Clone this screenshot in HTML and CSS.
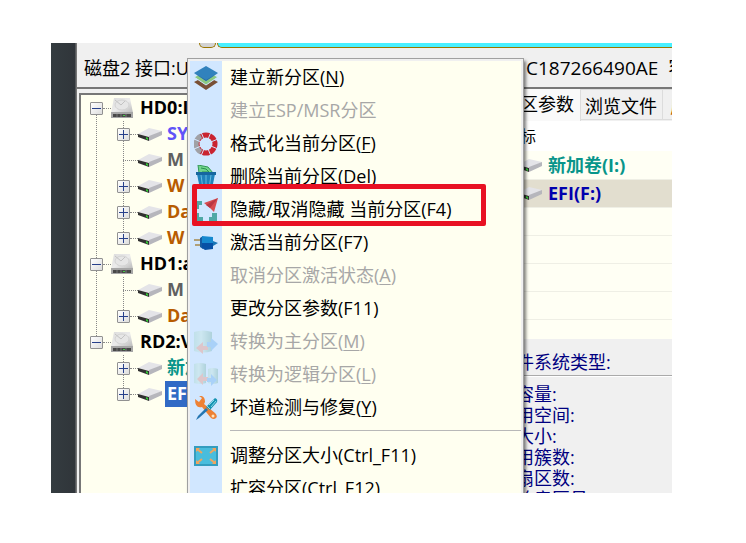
FILE: index.html
```html
<!DOCTYPE html>
<html lang="zh-CN">
<head>
    <meta charset="UTF-8">
    <meta name="viewport" content="width=device-width, initial-scale=1.0">
    <title>磁盘2</title>
    <link rel="stylesheet" href="styles.css">
</head>
<body>
    <!-- Shared icons -->
    <svg class="defs" width="0" height="0" aria-hidden="true">
        <defs>
            <linearGradient id="metal" x1="0" y1="0" x2="1" y2="1">
                <stop offset="0" stop-color="#dcdcdc"/>
                <stop offset="0.5" stop-color="#ececec"/>
                <stop offset="1" stop-color="#b8b8b8"/>
            </linearGradient>
            <linearGradient id="drum" x1="0" x2="1">
                <stop offset="0" stop-color="#a9d8cb"/>
                <stop offset="0.4" stop-color="#c8e8dd"/>
                <stop offset="1" stop-color="#7db5a8"/>
            </linearGradient>
        </defs>
        <symbol id="disk" viewBox="0 0 22 22">
            <path d="M3 1h16l3 15H0z" fill="url(#metal)"/>
            <ellipse cx="11" cy="8" rx="7" ry="5" fill="#e6e6e6" stroke="#d2d2d2"/>
            <path d="M4 3l6 5 4-4" fill="none" stroke="#c2c2c2"/>
            <path d="M0 15h22v6H0z" fill="#a6a6a6"/>
            <path d="M2 17h18v3H2z" fill="#484848"/>
            <path d="M6 17v3M10 17v3M15 17v3" stroke="#777"/>
            <path d="M12 18h2v1h-2z" fill="#4c4"/>
        </symbol>
        <symbol id="volume" viewBox="0 0 24 13">
            <path d="M0 6L11 0l13 3-12 6z" fill="#e4e4e8"/>
            <path d="M11 8l13-5v4l-13 6z" fill="#b6b6bc"/>
            <path d="M0 6l11 3v4L0 9z" fill="#303030"/>
            <path d="M8 9l2 1v2l-2-1z" fill="#3c3"/>
        </symbol>
        <symbol id="cylinder" viewBox="0 0 24 24">
            <path d="M0 2q9-3 18 0v19q-9 3-18 0z" fill="url(#drum)"/>
            <path d="M2 18l7-6v4h5v4H9v4z" fill="#f0957e"/>
            <path d="M24 14l-7-6v4h-4v5h4v4z" fill="#6fb2ee"/>
        </symbol>
        <symbol id="cylinders" viewBox="0 0 24 24">
            <path d="M0 1q6-2 12 0v19q-6 2-12 0z" fill="url(#drum)"/>
            <path d="M14 6q5-2 10 0v14q-5 2-10 0z" fill="url(#drum)"/>
            <path d="M3 16l6-6v4h5v4H9v4z" fill="#f0957e"/>
            <path d="M23 17l-6-6v4h-4v4h4v4z" fill="#6fb2ee"/>
        </symbol>
    </svg>

    <div class="window">
        <div class="desktop-edge"></div>
        <div class="app">
            <div class="disk-bar">
                <div class="disk-part part-small"></div>
                <div class="disk-part part-main"></div>
            </div>
            <div class="disk-info">
                <span>磁盘2 接口:U</span>
                <span class="serial">C187266490AE &nbsp;容</span>
            </div>

            <div class="panes">
                <ul class="tree">
                    <li>
                        <div class="node"><button class="toggle minus" aria-label="HD0"></button><i class="dots"></i><svg class="disk"><use href="#disk"/></svg><span>HD0:I</span></div>
                        <ul>
                            <li class="node"><button class="toggle" aria-label="SY"></button><i class="dots"></i><svg class="volume"><use href="#volume"/></svg><span class="violet">SY</span></li>
                            <li class="node"><i class="dots leaf"></i><svg class="volume"><use href="#volume"/></svg><span class="grey">M</span></li>
                            <li class="node"><button class="toggle" aria-label="W"></button><i class="dots"></i><svg class="volume"><use href="#volume"/></svg><span class="brown">W</span></li>
                            <li class="node"><button class="toggle" aria-label="Da"></button><i class="dots"></i><svg class="volume"><use href="#volume"/></svg><span class="brown">Da</span></li>
                            <li class="node"><button class="toggle" aria-label="W"></button><i class="dots"></i><svg class="volume"><use href="#volume"/></svg><span class="brown">W</span></li>
                        </ul>
                    </li>
                    <li>
                        <div class="node"><button class="toggle minus" aria-label="HD1"></button><i class="dots"></i><svg class="disk"><use href="#disk"/></svg><span>HD1:a</span></div>
                        <ul>
                            <li class="node"><i class="dots leaf"></i><svg class="volume"><use href="#volume"/></svg><span class="grey">M</span></li>
                            <li class="node"><button class="toggle" aria-label="Da"></button><i class="dots"></i><svg class="volume"><use href="#volume"/></svg><span class="brown">Da</span></li>
                        </ul>
                    </li>
                    <li>
                        <div class="node"><button class="toggle minus" aria-label="RD2"></button><i class="dots"></i><svg class="disk"><use href="#disk"/></svg><span>RD2:V</span></div>
                        <ul>
                            <li class="node"><button class="toggle" aria-label="新加"></button><i class="dots"></i><svg class="volume"><use href="#volume"/></svg><span class="teal">新加</span></li>
                            <li class="node"><button class="toggle" aria-label="EFI"></button><i class="dots"></i><svg class="volume"><use href="#volume"/></svg><span class="selected">EFI</span></li>
                        </ul>
                    </li>
                </ul>

                <div class="details">
                    <div class="tabs">
                        <button class="tab active">分区参数</button>
                        <button class="tab">浏览文件</button>
                        <button class="tab last">扇</button>
                    </div>
                    <div class="volumes">
                        <table>
                            <thead><tr><th>卷标</th></tr></thead>
                            <tbody>
                                <tr><td class="teal"><svg class="volume"><use href="#volume"/></svg>新加卷(I:)</td></tr>
                                <tr class="current"><td><svg class="volume"><use href="#volume"/></svg>EFI(F:)</td></tr>
                                <tr><td></td></tr>
                                <tr><td></td></tr>
                                <tr><td></td></tr>
                                <tr><td></td></tr>
                            </tbody>
                        </table>
                    </div>
                    <p class="filesystem">文件系统类型:</p>
                    <ul class="facts">
                        <li>总容量:</li>
                        <li>已用空间:</li>
                        <li>簇大小:</li>
                        <li>已用簇数:</li>
                        <li>总扇区数:</li>
                        <li>起始扇区号:</li>
                    </ul>
                </div>
            </div>
        </div>

        <!-- Context menu -->
        <div class="menu">
            <ul>
                <li><button>
                    <svg viewBox="0 0 24 24"><path d="M0 16l12-6 12 6-12 8z" fill="#795035"/><path d="M0 11l12-6 12 6-12 8z" fill="#8bc982" stroke="#d1e7ff"/><path d="M0 7l12-7 12 7-12 8z" fill="#3182bd"/><path d="M0 7l12 7 12-7-12 8z" fill="#2669a2"/></svg>
                    <span>建立新分区(<u>N</u>)</span></button></li>
                <li><button disabled><svg></svg><span>建立ESP/MSR分区</span></button></li>
                <li><button>
                    <svg viewBox="0 0 24 24"><circle cx="12" cy="12" r="9" fill="none" stroke="#ca2430" stroke-width="5"/><path d="M7 20A9 9 0 0 1 7 4" fill="none" stroke="#a0a1a6" stroke-width="5"/><path d="M7 0l10 24M17 0L7 24M0 7l24 10M0 17L24 7" stroke="#d1e7ff"/><circle cx="12" cy="12" r="6" fill="#d1e7ff"/></svg>
                    <span>格式化当前分区(<u>F</u>)</span></button></li>
                <li><button>
                    <svg viewBox="0 0 24 24"><path d="M5 8L4 0l10 2 5 6z" fill="#72d68c" stroke="#329858"/><path d="M7 3l5 1 3 3H8" fill="none" stroke="#289050"/><path d="M3 9h18l-3 15H6z" fill="#1f82bb"/><path d="M7 10l2 14M12 10v14M17 10l-2 14" stroke="#66bce0"/><path d="M2 7h20v3H2z" fill="#1667a0"/></svg>
                    <span>删除当前分区(Del)</span></button></li>
                <li class="marked"><button>
                    <svg viewBox="0 0 24 24"><path d="M0 3h8v4H5v4H0zM0 15h5v4h4v5H0zM15 19h3v-4h5v9h-8z" fill="#4fa8a5"/><path d="M24 0l-4 14-4-4-6-5z" fill="#d84c50"/><path d="M24 0l-8 10-4-3z" fill="#b93742"/></svg>
                    <span>隐藏/取消隐藏 当前分区(F4)</span></button></li>
                <li><button>
                    <svg viewBox="0 0 24 24"><path d="M0 9h7M1 14h7" stroke="#b0a078" stroke-width="2"/><path d="M6 7l3-2v13l-3-2z" fill="#155ba0"/><path d="M8 5l11 1v6H8z" fill="#1689cf"/><path d="M8 12h11v6l-8 1-3-2z" fill="#0750a5"/><path d="M19 10l5 2-5 3z" fill="#1976b6"/></svg>
                    <span>激活当前分区(F7)</span></button></li>
                <li><button disabled><svg></svg><span>取消分区激活状态(<u>A</u>)</span></button></li>
                <li><button><svg></svg><span>更改分区参数(F11)</span></button></li>
                <li><button disabled><svg><use href="#cylinder"/></svg><span>转换为主分区(<u>M</u>)</span></button></li>
                <li><button disabled><svg><use href="#cylinders"/></svg><span>转换为逻辑分区(<u>L</u>)</span></button></li>
                <li><button>
                    <svg viewBox="0 0 24 24"><path d="M1 3l4 3 3-4-3-2q6-1 6 6l-1 2 11 9q3 3 1 5t-5 0L8 11q-7 2-7-8z" fill="#ed8134"/><circle cx="19" cy="20" r="1.5" fill="#ffe4bc"/><path d="M21 2q3 1 2 4l-7 8-4-3z" fill="#1593b2"/><path d="M13 10l3 3M15 9l5-5M17 11l5-6" stroke="#8ed9e9"/><path d="M12 12l2 2-9 8-3 2 2-4z" fill="#2476b2"/></svg>
                    <span>坏道检测与修复(<u>Y</u>)</span></button></li>
                <li class="separator"></li>
                <li><button>
                    <svg viewBox="0 0 24 24"><path d="M0 2h24v20H0z" fill="#339dbf"/><path d="M2 4h20v16H2z" fill="#49bddd"/><path d="M3 5l5 4M21 5l-5 4M3 19l5-4M21 19l-5-4" stroke="#f0a55e" stroke-width="2"/><path d="M2 4h4L2 8zM22 4h-4l4 4zM2 20h4l-4-4zM22 20h-4l4-4z" fill="#f0a55e"/></svg>
                    <span>调整分区大小(Ctrl_F11)</span></button></li>
                <li><button><svg></svg><span>扩容分区(Ctrl_F12)</span></button></li>
            </ul>
        </div>
    </div>
</body>
</html>
```
FILE: styles.css
```css
* {
    box-sizing: border-box;
}

body {
    margin: 0;
    padding: 43px 74px 50px 51px;
    height: 100vh;
    background-color: #fff;
    font-family: "Open Sans", "Noto Sans CJK SC", sans-serif;
    font-size: 18px;
    line-height: 26px;
    color: #000;
}

ul {
    list-style: none;
    margin: 0;
    padding: 0;
}

button {
    font: inherit;
    color: inherit;
    border: none;
    padding: 0;
    background: none;
}

svg {
    flex: none;
}

.defs {
    position: absolute;
}

.window {
    position: relative;
    display: flex;
    height: 100%;
    overflow: hidden;
    white-space: nowrap;
}

.desktop-edge {
    flex: none;
    width: 25px;
    background: linear-gradient(90deg, #343c40, #30353a);
    border-right: 1px solid #55585b;
}

.app {
    flex: 1;
    min-width: 0;
    display: flex;
    flex-direction: column;
    background-color: #f0f0f0;
    border-left: 1px solid #777;
}

/* Disk bar and info line */
.disk-bar {
    display: flex;
    flex: none;
    height: 5px;
    padding-left: 122px;
    gap: 1px;
}

.disk-part {
    border: 1px solid #9b7600;
    border-top: none;
}

.part-small {
    width: 17px;
    background-color: #d2d2d2;
    border-radius: 0 0 5px 5px;
}

.part-main {
    flex: 1;
    background-color: #48f0ff;
    border-right: none;
    border-radius: 0 0 0 6px;
}

.disk-info,
.panes {
    display: grid;
    grid-template-columns: 1fr 182px;
}

.disk-info {
    flex: none;
    height: 41px;
    padding-left: 7px;
    line-height: 40px;
    border-bottom: 2px solid #777;
}

.serial {
    padding-left: 36px;
    font-size: 19px;
    overflow: hidden;
}

/* Disk tree */
.panes {
    flex: 1;
    min-height: 0;
}

.tree {
    margin: 4px 5px 0 2px;
    border: 2px solid #777;
    border-bottom: none;
    background-color: #fffff0;
    font-weight: bold;
    overflow: hidden;
}

.tree li {
    background-image: repeating-linear-gradient(#888 0 1px, transparent 1px 2px);
    background-repeat: no-repeat;
    background-size: 1px 100%;
}

.tree > li {
    background-position: 15px 0;
}

.tree > li:first-child {
    background-position: 15px 14px;
}

.tree > li:last-child,
.tree ul li:last-child {
    background-size: 1px 14px;
}

.tree ul li {
    background-position: 42px 0;
}

.node {
    display: flex;
    align-items: center;
    height: 26px;
    padding-left: 9px;
}

.node span {
    padding-bottom: 2px;
}

.tree ul .node {
    padding-left: 36px;
}

.toggle {
    width: 13px;
    height: 13px;
    border: 1px solid #919191;
    border-radius: 1px;
    background: linear-gradient(#27408b, #27408b) center / 9px 1px no-repeat,
        linear-gradient(#27408b, #27408b) center / 1px 9px no-repeat,
        linear-gradient(135deg, #fff, #ddd);
}

.toggle.minus {
    background: linear-gradient(#27408b, #27408b) center / 9px 1px no-repeat,
        linear-gradient(135deg, #fff, #ddd);
}

.dots {
    width: 8px;
    border-top: 1px dotted #888;
}

.dots.leaf {
    width: 15px;
    margin-left: 6px;
}

.disk {
    width: 22px;
    height: 22px;
    margin-right: 7px;
}

.volume {
    width: 24px;
    height: 13px;
    margin-right: 3px;
}

.tree ul span {
    padding: 0 2px 2px;
}

.violet {
    color: #6054f8;
}

.grey {
    color: #606060;
}

.brown {
    color: #b85c00;
}

.teal {
    color: #08958a;
}

.tree .selected {
    height: 26px;
    line-height: 24px;
    color: #fff;
    background-color: #316ac5;
}

/* Partition details */
.details {
    display: flex;
    flex-direction: column;
    min-width: 0;
    overflow: hidden;
    color: #000080;
}

.tabs {
    display: flex;
    flex: none;
    height: 32px;
    color: #000;
}

.tab {
    flex: none;
    height: 31px;
    padding: 2px 5px 0 4px;
    border: 1px solid #dcdcdc;
    border-left: none;
}

.tab.active {
    height: 32px;
    padding: 0 6px 2px 12px;
    border: none;
    border-right: 1px solid #dcdcdc;
    background-color: #f9f9f9;
}

.tab.last {
    padding-left: 7px;
    color: #b85c00;
}

.volumes {
    flex: none;
    height: 218px;
    overflow: hidden;
    background-color: #fffff4;
}

.volumes table {
    width: 100%;
    border-collapse: collapse;
}

.volumes th {
    height: 30px;
    padding: 0 0 0 14px;
    background-color: #fff;
    color: #000;
    font-size: 16px;
    font-weight: normal;
    text-align: left;
}

.volumes td {
    height: 28px;
    padding: 0 0 0 28px;
    border-bottom: 1px solid #efefe5;
    font-weight: bold;
}

.volumes .volume {
    margin-right: 6px;
}

.current {
    background-color: #e2decf;
    color: #0000ae;
}

.filesystem {
    flex: none;
    height: 37px;
    margin: 0;
    padding: 10px 0 0 8px;
    border-bottom: 1px solid #aaa;
    box-shadow: 0 1px #fff;
}

.facts {
    padding: 8px 0 0 8px;
    line-height: 21px;
}

/* Context menu */
.menu {
    position: absolute;
    left: 136px;
    top: 15px;
    width: 337px;
    padding: 2px;
    border: 1px solid #a0a0a0;
    background-color: #f0f0f0;
    box-shadow: 2px 3px 3px rgba(0, 0, 0, 0.5);
}

.menu ul {
    background: linear-gradient(90deg, #d1e7ff 32px, #fffff0 32px);
}

.menu li {
    position: relative;
}

.menu button {
    display: flex;
    align-items: center;
    width: 100%;
    height: 33px;
    padding-left: 4px;
    gap: 12px;
    text-align: left;
}

.menu span {
    padding-bottom: 2px;
}

.menu button:disabled {
    color: #a7a7a7;
}

.menu svg {
    width: 24px;
    height: 24px;
}

.menu button:disabled svg {
    opacity: 0.4;
}

.menu u {
    text-underline-offset: 2px;
}

.menu .separator {
    margin: 6px 0 8px 40px;
    border-top: 1px solid #b8b8b8;
}

/* Highlight frame round the chosen command */
.marked::after {
    content: "";
    position: absolute;
    inset: -9px 35px 0 2px;
    z-index: 1;
    border: 5px solid #e81123;
    border-radius: 2px;
    pointer-events: none;
}
```
